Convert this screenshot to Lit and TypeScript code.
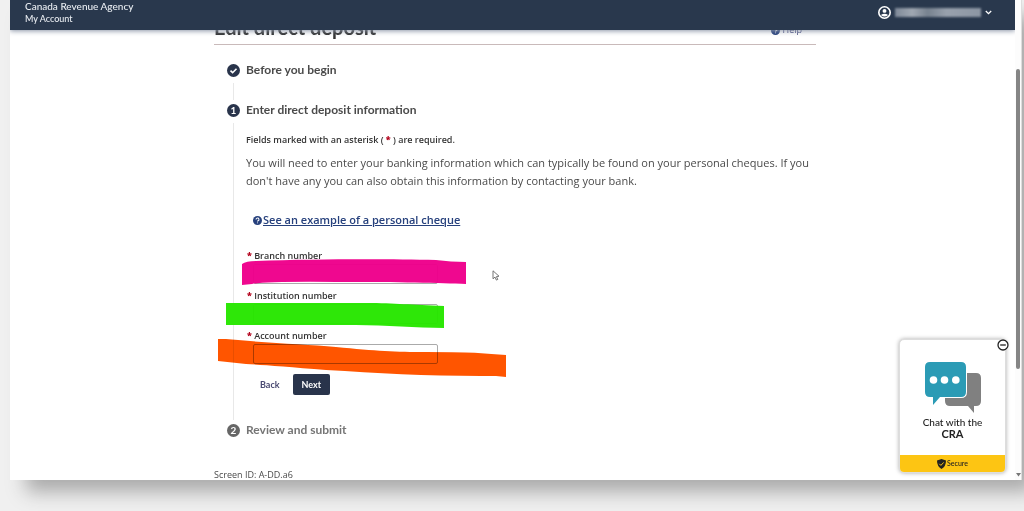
import { LitElement, html, css, svg } from "lit";
import { customElement } from "lit/decorators.js";

const helpIcon = html`<svg class="help-icon" viewBox="0 0 16 16" aria-hidden="true">
  <circle cx="8" cy="8" r="8" fill="currentColor" />
  <path d="M5.4 6.2a2.6 2.5 0 1 1 3.6 2.2q-1 .5-1 1.4M8 11.4v1.6" fill="none" stroke="#fff" stroke-width="1.9" />
</svg>`;

const fields = [
  { id: "branch", label: "Branch number" },
  { id: "institution", label: "Institution number" },
  { id: "account", label: "Account number" },
];

const strokes = svg`
  <path class="soft" fill="#ee008b" d="M-4 15Q0 12 10 12C70 10 140 10 190 11Q205 13 220 13V35C195 34 150 33 100 33Q20 32 6 35L-4 36Z"/>
  <path class="soft" fill="#27e600" d="M-20 54H120C150 54 165 56 198 57V79C170 79 140 76 110 76H-20Z"/>
  <path class="blend" fill="#ff5500" d="M-28 90L-20 90C20 94 60 95 90 98C130 102 150 103 180 103Q220 103 232 104Q245 105 260 106V128L250 127H235C180 127 130 124 80 121Q20 116 0 115L-28 112Z"/>`;

@customElement("app-root")
export class AppRoot extends LitElement {
  static styles = css`
    :host { display: block; height: 100vh; box-sizing: border-box; padding: 0 2px 31px 10px; background: #f0f0f0; overflow: hidden; font-family: "Open Sans", sans-serif; color: #4a4a4a; }
    * { box-sizing: border-box; }
    h1, h2, p, ol { margin: 0; padding: 0; }
    .window { position: relative; display: grid; grid-template-columns: minmax(0, 1fr) 7px; height: 100%; background: #fff; box-shadow: 14px 14px 18px -2px #aaa; }
    .view { overflow: hidden; min-height: 0; }
    .bar { position: relative; z-index: 2; display: flex; justify-content: space-between; height: 30px; padding: 0 23px 0 15px; background: #29384d; color: #e9edf2; font-family: Lato, sans-serif; box-shadow: 0 1px 5px #8a94a6; }
    .brand { font-size: 10px; line-height: 13px; font-weight: 500; }
    .brand span { display: block; font-size: 9px; line-height: 12px; }
    .user { display: flex; align-items: center; gap: 4px; height: 25px; padding: 0; border: 0; background: none; color: #fff; }
    .user .face { width: 13px; height: 13px; }
    .user .name { width: 86px; height: 9px; background: linear-gradient(90deg, #7e8998, #a0a8b2 20%, #77828f 38%, #98a1ad 60%, #8c96a3); filter: blur(1px); }
    .user .chev { width: 7px; height: 5px; }
    main { margin-top: -16px; padding: 0 199px 0 204px; }
    .title { display: flex; justify-content: space-between; align-items: center; height: 31px; padding: 0 14px 4px 0; border-bottom: 1px solid #c9baba; }
    h1 { font: 700 20px/26px Lato, sans-serif; color: #333; }
    .help { display: flex; align-items: center; gap: 3px; font-size: 9px; line-height: 14px; color: #3b3f78; text-decoration: none; padding-top: 6px; }
    .help-icon { width: 9px; height: 9px; color: #26407c; flex: none; }
    ol { list-style: none; padding: 16px 0 0 13px; }
    .step { display: grid; grid-template-columns: 13px minmax(0, 1fr); column-gap: 6px; }
    .rail { display: flex; flex-direction: column; align-items: center; padding-top: 3px; }
    .rail svg { width: 13px; height: 13px; flex: none; }
    .rail text { font: 700 10px Lato, sans-serif; fill: #fff; text-anchor: middle; }
    .rail i { flex: 1; width: 1px; margin: 6px 0 1px; background: #e8e8e8; }
    h2 { font: 700 12px/18px Lato, sans-serif; color: #4a4a4a; }
    .first { min-height: 40px; }
    .later h2 { color: #757575; }
    .note { margin-top: 14px; font-size: 9px; line-height: 14px; font-weight: 600; color: #333; }
    .note b, label b { color: #b3001b; }
    .intro { margin-top: 7px; font-size: 11px; line-height: 18px; }
    .example { display: flex; align-items: center; gap: 1px; margin: 21px 0 0 7px; font-size: 11px; line-height: 18px; font-weight: 600; color: #26407c; }
    .example a { color: inherit; }
    .fields { position: relative; margin-top: 20px; padding-left: 1px; }
    .field { height: 40px; }
    label { display: block; font-size: 9px; line-height: 14px; font-weight: 600; color: #333; }
    input { display: block; width: 185px; height: 20px; margin: 1px 0 0 6px; border: 1px solid #aaa; border-radius: 2px; background: #fff; }
    .marks { position: absolute; left: 0; top: 0; width: 1px; height: 1px; overflow: visible; pointer-events: none; }
    .soft { opacity: 0.97; }
    .blend { mix-blend-mode: multiply; }
    .actions { display: flex; gap: 5px; margin: 5px 0 26px 6px; }
    .actions button { height: 21px; padding: 0 8px; border: 0; border-radius: 2px; font: 700 9px Lato, sans-serif; color: #4a4a72; background: none; }
    .actions .next { padding: 0 9px; color: #fff; background: #29344b; }
    .screen { margin-top: 29px; font-size: 9px; line-height: 14px; }
    .scroll { display: flex; flex-direction: column; align-items: center; background: #fcfcfc; padding: 69px 0 3px; border-right: 1px solid #ddd; }
    .thumb { height: 300px; width: 4px; border-radius: 2px; background: #858585; }
    .scroll svg { width: 5px; height: 4px; margin-top: auto; }
    .chat { position: absolute; right: 16px; bottom: 7px; z-index: 3; width: 107px; height: 134px; display: flex; flex-direction: column; align-items: center; background: #fff; border: 1px solid #ddd; border-radius: 5px; box-shadow: 0 0 4px #aaa; font: 10px/11px Lato, sans-serif; color: #222; text-align: center; }
    .bubbles { width: 58px; height: 52px; margin-top: 22px; flex: none; }
    .chat p { margin-top: 3px; font-weight: 500; }
    .chat p b { display: block; font-size: 11px; }
    .secure { display: flex; align-items: center; justify-content: center; gap: 1px; align-self: stretch; height: 17px; margin-top: auto; background: #fdc513; border-radius: 0 0 4px 4px; font-size: 7px; font-weight: 500; }
    .secure svg { width: 9px; height: 10px; }
    .min { position: absolute; right: -4px; top: -1px; width: 12px; height: 12px; padding: 0; border: 0; border-radius: 6px; background: #fff; }
    .min svg { display: block; width: 12px; height: 12px; }
    .cursor { position: absolute; left: 246px; top: 21px; width: 8px; height: 11px; }
  `;

  render() {
    return html`<div class="window">
      <div class="view">
        <header class="bar">
          <div class="brand">Canada Revenue Agency<span>My Account</span></div>
          <button class="user" aria-label="Profile menu">
            <svg class="face" viewBox="0 0 16 16"><circle cx="8" cy="8" r="7" fill="none" stroke="#fff" stroke-width="2"/><circle cx="8" cy="6" r="2.4" fill="#fff"/><path d="M3.5 11Q8 7.8 12.5 11Q8 15 3.5 11" fill="#fff"/></svg>
            <span class="name"></span>
            <svg class="chev" viewBox="0 0 7 5"><path d="M.8 1l2.7 2.6L6.2 1" fill="none" stroke="#fff" stroke-width="1.3"/></svg>
          </button>
        </header>
        <main>
          <div class="title"><h1>Edit direct deposit</h1><a class="help" href="#help">${helpIcon}Help</a></div>
          <ol>
            <li class="step first">
              <div class="rail"><svg viewBox="0 0 13 13"><circle cx="6.5" cy="6.5" r="6.5" fill="#29344b"/><path d="M3.5 6.7l2.1 2 3.9-4" fill="none" stroke="#fff" stroke-width="1.6"/></svg><i></i></div>
              <h2>Before you begin</h2>
            </li>
            <li class="step">
              <div class="rail"><svg viewBox="0 0 13 13"><circle cx="6.5" cy="6.5" r="6.5" fill="#29344b"/><text x="6.5" y="10">1</text></svg><i></i></div>
              <form @submit=${(e: Event) => e.preventDefault()}>
                <h2>Enter direct deposit information</h2>
                <p class="note">Fields marked with an asterisk ( <b>*</b> ) are required.</p>
                <p class="intro">You will need to enter your banking information which can typically be found on your personal cheques. If you don't have any you can also obtain this information by contacting your bank.</p>
                <div class="example">${helpIcon}<a href="#cheque">See an example of a personal cheque</a></div>
                <div class="fields">
                  ${fields.map((f) => html`<div class="field"><label for=${f.id}><b>*</b> ${f.label}</label><input id=${f.id} type="text" /></div>`)}
                  <svg class="marks" aria-hidden="true">${strokes}</svg>
                  <svg class="cursor" viewBox="0 0 8 11" aria-hidden="true"><path d="M1 .8v8l2-1.7 1.4 3 1.4-.7-1.4-2.8L7 6.2z" fill="#fff" stroke="#666" stroke-width=".9"/></svg>
                </div>
                <div class="actions"><button type="button">Back</button><button class="next">Next</button></div>
              </form>
            </li>
            <li class="step later">
              <div class="rail"><svg viewBox="0 0 13 13"><circle cx="6.5" cy="6.5" r="6.5" fill="#666"/><text x="6.5" y="10">2</text></svg></div>
              <h2>Review and submit</h2>
            </li>
          </ol>
          <p class="screen">Screen ID: A-DD.a6</p>
        </main>
      </div>
      <div class="scroll"><div class="thumb"></div><svg viewBox="0 0 5 4"><path d="M0 0h5L2.5 3.5z" fill="#777"/></svg></div>
      <aside class="chat">
        <button class="min" aria-label="Minimize chat"><svg viewBox="0 0 12 12"><circle cx="6" cy="6" r="5" fill="#fff" stroke="#222" stroke-width="1.3"/><path d="M3.2 6h5.6" stroke="#222" stroke-width="1.3"/></svg></button>
        <svg class="bubbles" viewBox="0 0 58 52" aria-hidden="true">
          <path d="M26 11h26q5 0 5 5v23q0 5-5 5h-2v7l-6-7H26q-5 0-5-5V16q0-5 5-5z" fill="#808080"/>
          <path d="M6 0h31q5 0 5 5v25q0 5-5 5H16l-7 8V35H6q-5 0-5-5V5q0-5 5-5z" fill="#2b9bb5" stroke="#fff" stroke-width="2" paint-order="stroke"/>
          <circle cx="9.5" cy="18" r="3.8" fill="#fff"/><circle cx="20.5" cy="18" r="3.8" fill="#fff"/><circle cx="31.8" cy="18" r="3.8" fill="#fff"/>
        </svg>
        <p>Chat with the<b>CRA</b></p>
        <div class="secure"><svg viewBox="0 0 9 10"><path d="M4.5 0L9 1.5Q9 7.5 4.5 10 0 7.5 0 1.5z" fill="#222"/><path d="M2.3 4.8l1.6 1.6 2.8-3" fill="none" stroke="#fdc513"/></svg>Secure</div>
      </aside>
    </div>`;
  }
}
